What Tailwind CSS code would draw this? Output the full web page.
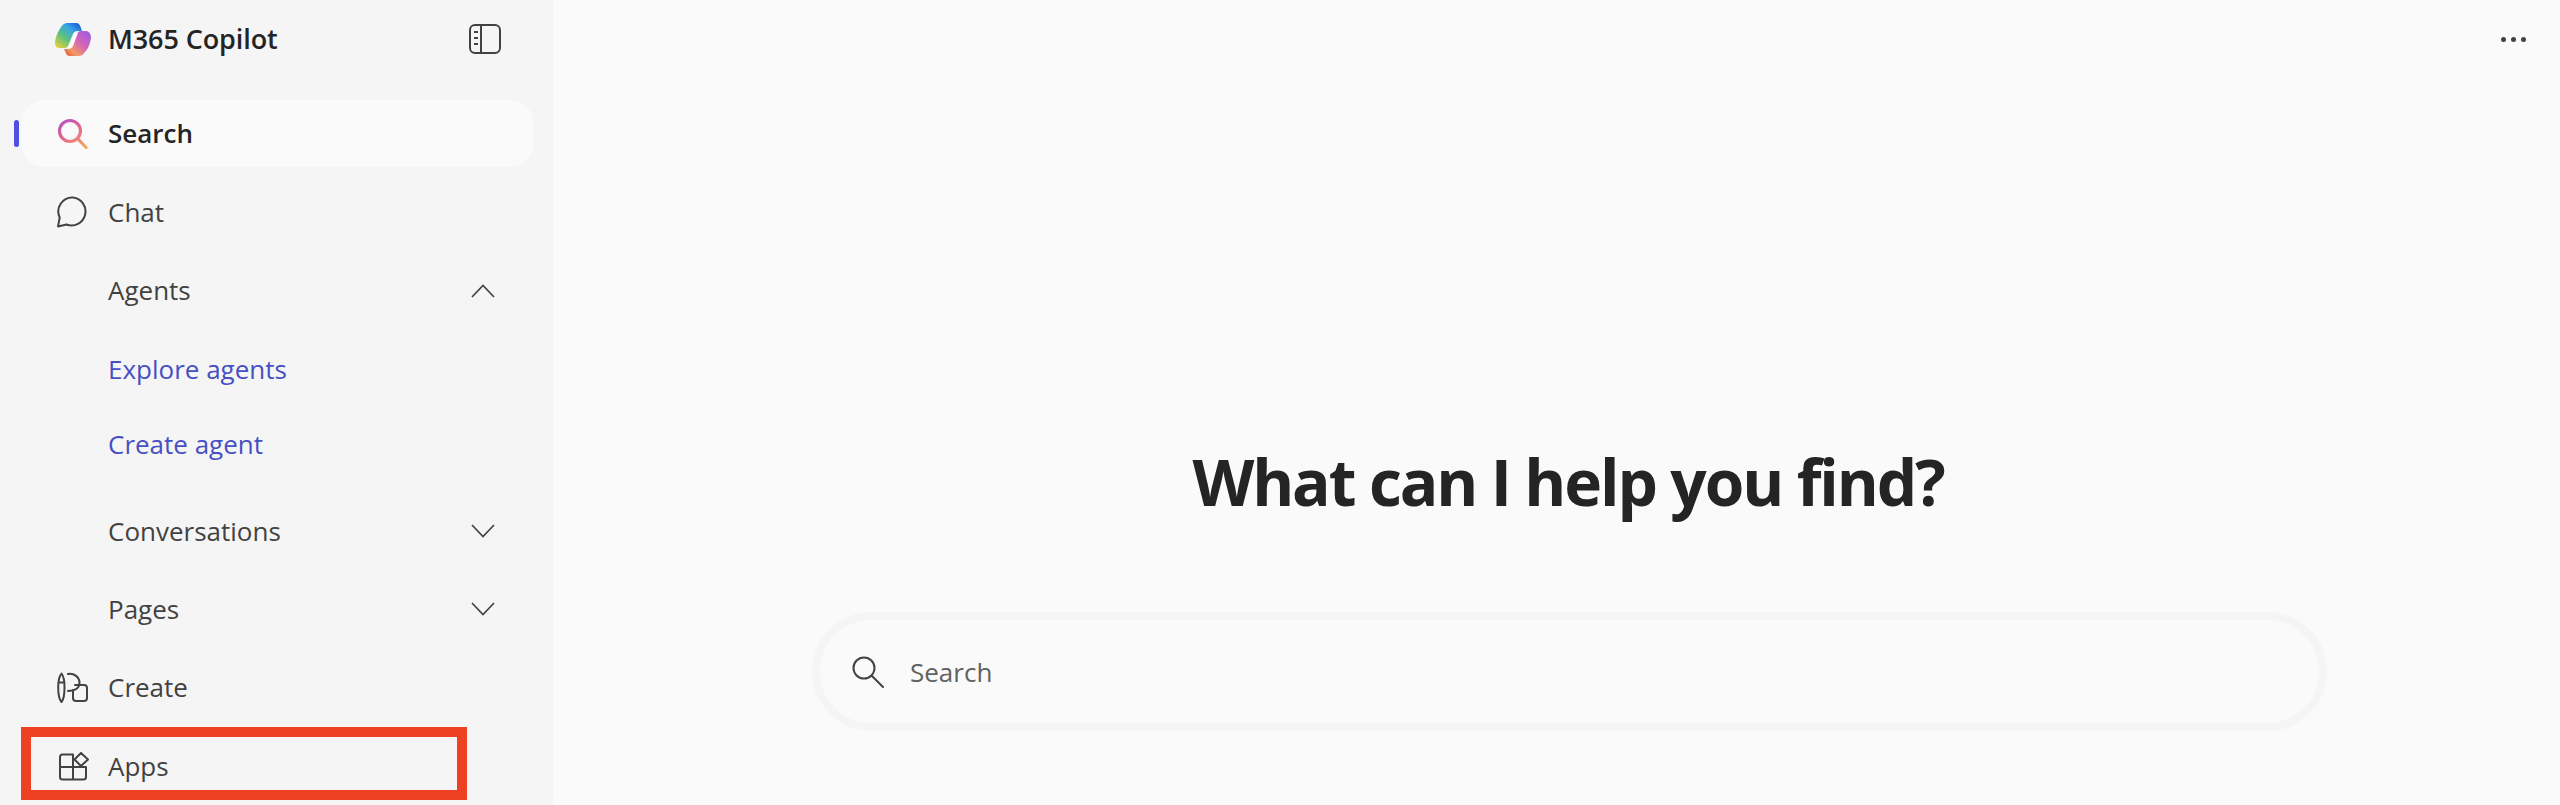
<!DOCTYPE html>
<html>
  <head>
    <meta charset="utf-8" />
    <title>M365 Copilot</title>
    <script src="https://cdn.jsdelivr.net/npm/@tailwindcss/browser@4"></script>
  </head>
  <body class="h-[805px] overflow-hidden bg-[#fafafa] font-['Open_Sans',sans-serif] text-[#424242]">
    <div class="relative flex h-[805px]">
      <!-- Sidebar -->
      <aside class="w-[553px] shrink-0 bg-[#f5f5f5] text-[26px]">
        <div class="flex h-[78px] items-center pl-[55px] pr-[52px]">
          <svg class="h-[33px] w-[36px] shrink-0" viewBox="0 0 36 33">
            <defs>
              <linearGradient id="logoA" x1="24" y1="0" x2="4" y2="26" gradientUnits="userSpaceOnUse">
                <stop offset="0" stop-color="#1c56d6" />
                <stop offset="0.3" stop-color="#37a5e6" />
                <stop offset="0.62" stop-color="#5cc27a" />
                <stop offset="1" stop-color="#e6d23c" />
              </linearGradient>
              <linearGradient id="logoB" x1="34" y1="8" x2="12" y2="32" gradientUnits="userSpaceOnUse">
                <stop offset="0" stop-color="#9a5ae6" />
                <stop offset="0.45" stop-color="#d664b8" />
                <stop offset="0.8" stop-color="#f29a62" />
                <stop offset="1" stop-color="#e8603c" />
              </linearGradient>
            </defs>
            <path fill="url(#logoA)" d="M12 0H21C24 0 25 2 26 5L27 8H23C20 8 19 9 18 11L13 23C12 25 10 25 8 25H4C1 25 0 22 0 19C1 12 4 7 6 4C8 1 10 0 12 0Z" />
            <path fill="url(#logoB)" d="M26 8H31C34 8 36 11 36 15C35 21 33 26 30 29C28 32 26 33 23 33H15C12 33 11 31 10 28L9 26H13C16 26 17 25 18 23L23 10C23 9 24 8 26 8Z" />
            <path fill="#fbfbfb" d="M22 10L18.500 10C18 11 18 12 17.500 13L14 23L13 25L16 24.500C17 24 17.500 23 18 22L21.500 12.500Z" />
          </svg>
          <span class="ml-[17px] flex-1 text-[27px] font-semibold tracking-[-0.1px] text-[#242424]">M365 Copilot</span>
          <svg class="h-[30px] w-[32px]" viewBox="0 0 32 30" fill="none" stroke="#424242" stroke-width="2">
            <rect x="1" y="1" width="30" height="28" rx="5" />
            <path d="M12 1V29M5 8H9M5 14H9M5 20H9" />
          </svg>
        </div>

        <div class="relative ml-[21px] mt-[22px] flex h-[67px] w-[513px] items-center rounded-[24px] bg-[#fafafa] pl-[36px] font-semibold text-[#242424]">
          <span class="absolute left-[-7px] top-[20px] h-[27px] w-[5px] rounded-full bg-[#4f52e0]"></span>
          <svg class="h-[31px] w-[31px]" viewBox="0 0 31 31" fill="none" stroke-width="3.2" stroke-linecap="round">
            <defs>
              <linearGradient id="searchGrad" x1="6" y1="1" x2="26" y2="30" gradientUnits="userSpaceOnUse">
                <stop offset="0" stop-color="#b650c0" />
                <stop offset="0.55" stop-color="#ea6f86" />
                <stop offset="1" stop-color="#f4a85e" />
              </linearGradient>
            </defs>
            <path stroke="url(#searchGrad)" d="M13 2.500A10.500 10.500 0 1 0 13 23.500A10.500 10.500 0 1 0 13 2.500ZM21 21L29 29.500" />
          </svg>
          <span class="ml-[20px]">Search</span>
        </div>

        <div class="ml-[57px] mt-[6px] flex h-[78px] items-center">
          <svg class="h-[32px] w-[31px]" viewBox="0 0 31 32" fill="none" stroke="#424242" stroke-width="2" stroke-linejoin="round">
            <path d="M16 1.500A14 14 0 1 1 9.500 28.500L1 30.500L2.700 21.500A14 14 0 0 1 16 1.500Z" />
          </svg>
          <span class="ml-[20px]">Chat</span>
        </div>

        <div class="flex h-[79px] items-center pl-[108px] pr-[58px]">
          <span class="flex-1">Agents</span>
          <svg class="h-[14px] w-[24px]" viewBox="0 0 24 14" fill="none" stroke="#424242" stroke-width="1.7"><path d="M1 13L12 1.500L23 13" /></svg>
        </div>
        <div class="flex h-[78px] items-center pl-[108px] text-[#4650c4]">Explore agents</div>
        <div class="flex h-[72px] items-center pl-[108px] text-[#4650c4]">Create agent</div>

        <div class="mt-[12px] flex h-[78px] items-center pl-[108px] pr-[58px]">
          <span class="flex-1">Conversations</span>
          <svg class="h-[14px] w-[24px]" viewBox="0 0 24 14" fill="none" stroke="#424242" stroke-width="1.7"><path d="M1 1L12 12.500L23 1" /></svg>
        </div>
        <div class="flex h-[78px] items-center pl-[108px] pr-[58px]">
          <span class="flex-1">Pages</span>
          <svg class="h-[14px] w-[24px]" viewBox="0 0 24 14" fill="none" stroke="#424242" stroke-width="1.7"><path d="M1 1L12 12.500L23 1" /></svg>
        </div>

        <div class="ml-[57px] flex h-[78px] items-center">
          <svg class="h-[31px] w-[31px]" viewBox="0 0 31 31" fill="none" stroke="#424242" stroke-width="2" stroke-linejoin="round" stroke-linecap="round">
            <path d="M4.500 1.500C6.500 4 7.500 8 7.500 15C7.500 23 6.500 28 4.500 30C2.500 28 1.200 23 1.200 15C1.200 8 2.500 4 4.500 1.500ZM1.500 10.500H7.500" />
            <path d="M11 2C17 1 22.500 5 22.500 11C22.500 16 18 19 11 19" />
            <path d="M18 13H27Q30 13 30 16V26Q30 29 27 29H19Q16 29 16 26V18" />
          </svg>
          <span class="ml-[20px]">Create</span>
        </div>
        <div class="ml-[59px] mt-[1px] flex h-[78px] items-center">
          <svg class="h-[29px] w-[30px]" viewBox="0 0 30 29" fill="none" stroke="#424242" stroke-width="2" stroke-linejoin="round">
            <path d="M3.500 2.500H14V27.500H3.500C2 27.500 1 26.500 1 25V5C1 3.500 2 2.500 3.500 2.500ZM1 15H27M14 15H27V25C27 26.500 26 27.500 24.500 27.500H14" />
            <path d="M22 1L29 7.500L22 14L15.500 7.500Z" fill="#f5f5f5" />
          </svg>
          <span class="ml-[19px]">Apps</span>
        </div>
      </aside>

      <!-- Main -->
      <main class="flex min-w-0 flex-1 flex-col items-center pl-[23px]">
        <div class="flex h-[78px] w-full items-center justify-end gap-[5px] pr-[34px]">
          <span class="h-[5px] w-[5px] rounded-full bg-[#424242]"></span>
          <span class="h-[5px] w-[5px] rounded-full bg-[#424242]"></span>
          <span class="h-[5px] w-[5px] rounded-full bg-[#424242]"></span>
        </div>
        <h1 class="mt-[372px] text-[64px] font-bold leading-[64px] tracking-[-2.1px] text-[#242424]">What can I help you find?</h1>
        <div class="ml-[3px] mt-[98px] flex h-[119px] w-[1515px] shrink-0 items-center rounded-full border-[8px] border-[#f5f5f5] bg-[#fafafa] pl-[32px] text-[26px] text-[#616161]">
          <svg class="h-[32px] w-[32px]" viewBox="0 0 32 32" fill="none" stroke="#424242" stroke-width="2" stroke-linecap="round">
            <path d="M12 1.500A10.500 10.500 0 1 0 12 22.500A10.500 10.500 0 1 0 12 1.500ZM20 20L31 31" />
          </svg>
          <span class="ml-[26px] pt-[2px]">Search</span>
        </div>
      </main>

      <!-- Red annotation box -->
      <div class="absolute left-[21px] top-[727px] h-[73px] w-[446px] border-[10px] border-[#ee4023]"></div>
    </div>
  </body>
</html>
